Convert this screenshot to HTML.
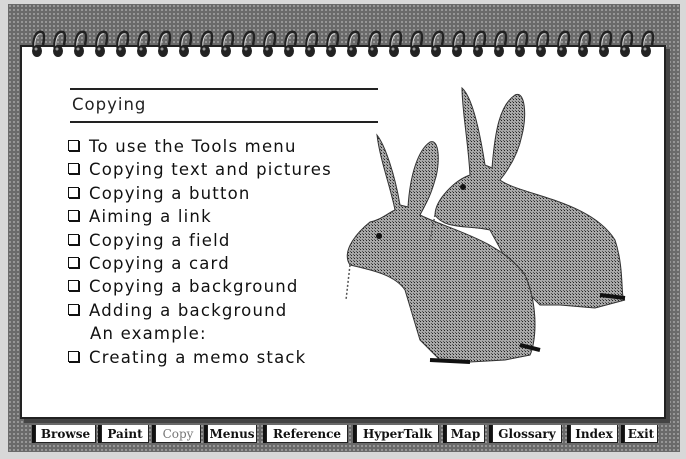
<!DOCTYPE html>
<html><head><style>
body{margin:0;width:686px;height:459px;overflow:hidden;background:#d8d8d8;font-family:"DejaVu Sans","Liberation Sans",sans-serif}
.bg{position:absolute;left:8px;top:4px;width:672px;height:448px;background-color:#6a6a6a;background-image:radial-gradient(#a0a0a0 30%,transparent 40%);background-size:4px 4px}
.page{position:absolute;left:20px;top:45px;width:642px;height:370px;background:#fff;border:2px solid #222;box-shadow:4px 4px 0 #444}
.t{position:absolute;left:70px;width:308px;height:2px;background:#222}
.list{position:absolute;left:68px;top:135px;font-size:16.5px;color:#111;line-height:23.4px;letter-spacing:1.2px}
.list div{white-space:nowrap}
.cb{display:inline-block;width:9px;height:9px;border:1.5px solid #111;margin-right:10px;vertical-align:1px;box-shadow:1px 1px 0 #111}
.tabs{position:absolute;top:425px;left:0;height:20px;font-family:"DejaVu Serif","Liberation Serif",serif;font-weight:bold;font-size:12px}
.tab{position:absolute;top:0;height:18px;background:#fff;border:1px solid #222;border-top:none;line-height:18px;color:#111;text-align:center;box-sizing:border-box;box-shadow:-3px 0 0 #111}
</style></head><body>
<div class="bg"></div>
<div class="page"></div>
<svg width="686" height="70" style="position:absolute;left:0;top:0">
<defs><g id="ring"><path d="M2 50 C0 40 4 30 10 32 C13 33 12 40 11 45" stroke="#222" stroke-width="2.5" fill="none"/><path d="M3 48 C2 40 5 33 9 34" stroke="#ddd" stroke-width="1" fill="none"/><ellipse cx="5" cy="51" rx="5" ry="6" fill="#222"/><circle cx="4" cy="49" r="1.5" fill="#999"/></g></defs>
<use href="#ring" x="32"/><use href="#ring" x="53"/><use href="#ring" x="74"/><use href="#ring" x="95"/><use href="#ring" x="116"/><use href="#ring" x="137"/><use href="#ring" x="158"/><use href="#ring" x="179"/><use href="#ring" x="200"/><use href="#ring" x="221"/><use href="#ring" x="242"/><use href="#ring" x="263"/><use href="#ring" x="284"/><use href="#ring" x="305"/><use href="#ring" x="326"/><use href="#ring" x="347"/><use href="#ring" x="368"/><use href="#ring" x="389"/><use href="#ring" x="410"/><use href="#ring" x="431"/><use href="#ring" x="452"/><use href="#ring" x="473"/><use href="#ring" x="494"/><use href="#ring" x="515"/><use href="#ring" x="536"/><use href="#ring" x="557"/><use href="#ring" x="578"/><use href="#ring" x="599"/><use href="#ring" x="620"/><use href="#ring" x="641"/>
</svg>
<div class="t" style="top:88px"></div>
<div style="position:absolute;left:72px;top:95px;font-size:16.5px;color:#222;letter-spacing:1px">Copying</div>
<div class="t" style="top:121px"></div>
<div class="list">
<div><span class="cb"></span>To use the Tools menu</div>
<div><span class="cb"></span>Copying text and pictures</div>
<div><span class="cb"></span>Copying a button</div>
<div><span class="cb"></span>Aiming a link</div>
<div><span class="cb"></span>Copying a field</div>
<div><span class="cb"></span>Copying a card</div>
<div><span class="cb"></span>Copying a background</div>
<div><span class="cb"></span>Adding a background</div>
<div style="padding-left:22px">An example:</div>
<div><span class="cb"></span>Creating a memo stack</div>
</div>
<svg width="686" height="459" style="position:absolute;left:0;top:0">
<defs><pattern id="st" width="3" height="3" patternUnits="userSpaceOnUse"><rect width="3" height="3" fill="#a8a8a8"/><rect width="1" height="1" fill="#222"/><rect x="2" y="2" width="1" height="1" fill="#555"/></pattern></defs>
<g fill="url(#st)" stroke="#333" stroke-width="1">
<path d="M462 88 C470 95 478 120 485 165 L492 168 C495 130 500 105 515 95 C525 90 527 115 522 135 C518 155 508 170 500 180 C520 195 590 200 615 240 C625 270 620 300 625 300 L595 308 L560 305 L540 305 L520 285 L490 230 C470 225 445 230 435 215 C435 200 455 180 470 175 C468 140 462 110 462 88 Z"/>
<path d="M377 135 C385 145 395 175 400 205 L408 207 C410 175 418 150 430 142 C440 138 440 165 435 180 C430 198 425 205 420 215 C450 230 500 240 525 275 C540 310 535 345 530 355 L505 360 L470 362 L440 360 L420 340 L405 290 C395 275 372 270 350 265 C340 250 360 230 370 222 C380 220 385 215 395 210 C390 185 380 160 377 135 Z"/>
</g>
<circle cx="379" cy="236" r="3" fill="#111"/><circle cx="463" cy="187" r="3" fill="#111"/>
<path d="M430 360 L470 362 M520 345 L540 350 M600 295 L625 298" stroke="#111" stroke-width="4"/>
<path d="M350 265 L346 300 M435 215 L430 240" stroke="#555" stroke-width="1.5" stroke-dasharray="2 2"/>
</svg>
<div class="tabs">
<div class="tab" style="left:35px;width:61px">Browse</div>
<div class="tab" style="left:101px;width:48px">Paint</div>
<div class="tab" style="left:155px;width:46px;font-weight:normal;color:#777;background:#fff">Copy</div>
<div class="tab" style="left:207px;width:50px">Menus</div>
<div class="tab" style="left:266px;width:82px">Reference</div>
<div class="tab" style="left:356px;width:83px">HyperTalk</div>
<div class="tab" style="left:446px;width:39px">Map</div>
<div class="tab" style="left:492px;width:70px">Glossary</div>
<div class="tab" style="left:570px;width:48px">Index</div>
<div class="tab" style="left:624px;width:34px">Exit</div>
</div>
</body></html>
